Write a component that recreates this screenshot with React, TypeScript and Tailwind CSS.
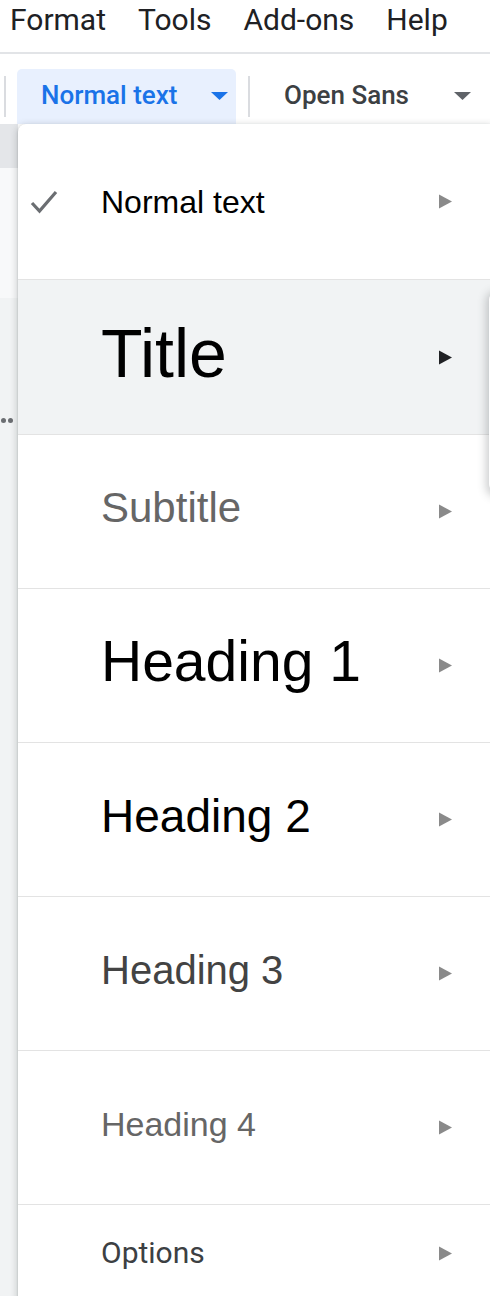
import React from "react";

const items = [
  { label: "Normal text", size: "text-[32px]", color: "text-[#000000]", checked: true, h: "h-[156px]", up: false },
  { label: "Title", size: "text-[68px]", color: "text-[#000000]", hover: true, h: "h-[155px]", up: true },
  { label: "Subtitle", size: "text-[42px]", color: "text-[#666666]", h: "h-[154px]", up: true },
  { label: "Heading 1", size: "text-[57px]", color: "text-[#000000]", h: "h-[154px]", up: true },
  { label: "Heading 2", size: "text-[46px]", color: "text-[#000000]", h: "h-[154px]", up: true },
  { label: "Heading 3", size: "text-[40px]", color: "text-[#434343]", h: "h-[154px]", up: true },
  { label: "Heading 4", size: "text-[34px]", color: "text-[#666666]", h: "h-[154px]", up: true },
];

function Caret({ color }: { color: string }) {
  return (
    <svg width="17" height="8" viewBox="0 0 17 8">
      <path d="M0 0 L17 0 L8.5 8 Z" fill={color} />
    </svg>
  );
}

function Arrow({ dark }: { dark?: boolean }) {
  return (
    <svg width="15" height="15" viewBox="0 0 15 15">
      <path d="M1 0.5 L14 7.5 L1 14.5 Z" fill={dark ? "#202124" : "#8a8a8a"} />
    </svg>
  );
}

function Check() {
  return (
    <svg width="28" height="26" viewBox="0 0 28 26">
      <path d="M2 14 L9.5 22 L26 3" fill="none" stroke="#6b6e72" strokeWidth="3.2" />
    </svg>
  );
}

export default function App() {
  return (
    <div className="relative w-[490px] h-[1296px] overflow-hidden bg-white font-['Roboto',sans-serif]">
      {/* menu bar */}
      <div className="h-[54px] border-b-2 border-[#e2e4e7] flex items-start pt-[2px] pl-[10px] gap-[32px] text-[30px] leading-[36px] text-[#202124]">
        <span>Format</span>
        <span>Tools</span>
        <span>Add-ons</span>
        <span>Help</span>
      </div>

      {/* toolbar */}
      <div className="h-[70px] flex items-start pl-[4px]">
        <div className="mt-[22px] w-[2px] h-[41px] bg-[#dadce0]" />
        <div className="ml-[11px] mt-[15px] w-[219px] h-[55px] rounded-t-[5px] bg-[#e8f0fe]">
          <div className="h-[53px] flex items-center pl-[24px] pr-[8px]">
            <span className="text-[26px] font-medium text-[#1a73e8]">Normal text</span>
            <span className="ml-auto">
              <Caret color="#1a73e8" />
            </span>
          </div>
        </div>
        <div className="ml-[12px] mt-[22px] w-[2px] h-[41px] bg-[#dadce0]" />
        <div className="flex-1 mt-[15px] h-[53px] flex items-center pl-[34px] pr-[19px]">
          <span className="text-[26px] font-medium text-[#3c4043]">Open Sans</span>
          <span className="ml-auto">
            <Caret color="#5f6368" />
          </span>
        </div>
      </div>

      <div className="flex">
        {/* left edge of the page behind the menu */}
        <div className="w-[18px] shrink-0 flex flex-col h-[1172px]">
          <div className="h-[44px] bg-[#e4e6e9]" />
          <div className="h-[130px] bg-[#f8f9fa]" />
          <div className="flex-1 bg-[#f1f3f4] pt-[120px]">
            <div className="flex gap-[2px] pl-[1px]">
              <div className="w-[5px] h-[5px] rounded-full bg-[#6b6e72]" />
              <div className="w-[5px] h-[5px] rounded-full bg-[#6b6e72]" />
            </div>
          </div>
        </div>

        {/* styles menu */}
        <div className="flex-1 bg-white rounded-tl-[8px] shadow-[0_2px_6px_2px_rgba(60,64,67,0.18),0_1px_2px_rgba(60,64,67,0.3)] font-['Liberation_Sans',Arial,sans-serif]">
          {items.map((it) => (
            <div
              key={it.label}
              className={`${it.h} flex items-center border-b border-[#e3e3e3] pr-[37px] ${it.hover ? "bg-[#f1f3f4]" : ""}`}
            >
              <div className="w-[83px] shrink-0 pl-[12px] flex items-center">
                {it.checked ? <Check /> : null}
              </div>
              <span className={`${it.size} ${it.color} leading-none whitespace-nowrap ${it.up ? "mb-[8px]" : ""}`}>
                {it.label}
              </span>
              <span className="ml-auto">
                <Arrow dark={it.hover} />
              </span>
            </div>
          ))}
          <div className="h-[96px] flex items-center pr-[37px]">
            <div className="w-[83px] shrink-0" />
            <span className="text-[30px] leading-none text-[#3c4043] font-['Roboto',sans-serif]">Options</span>
            <span className="ml-auto">
              <Arrow />
            </span>
          </div>
        </div>
      </div>

      {/* edge of the open submenu beside the hovered item */}
      <div className="absolute left-[489px] top-[292px] w-[40px] h-[200px] rounded-[8px] bg-white shadow-[0_2px_8px_3px_rgba(60,64,67,0.25)]" />
    </div>
  );
}
